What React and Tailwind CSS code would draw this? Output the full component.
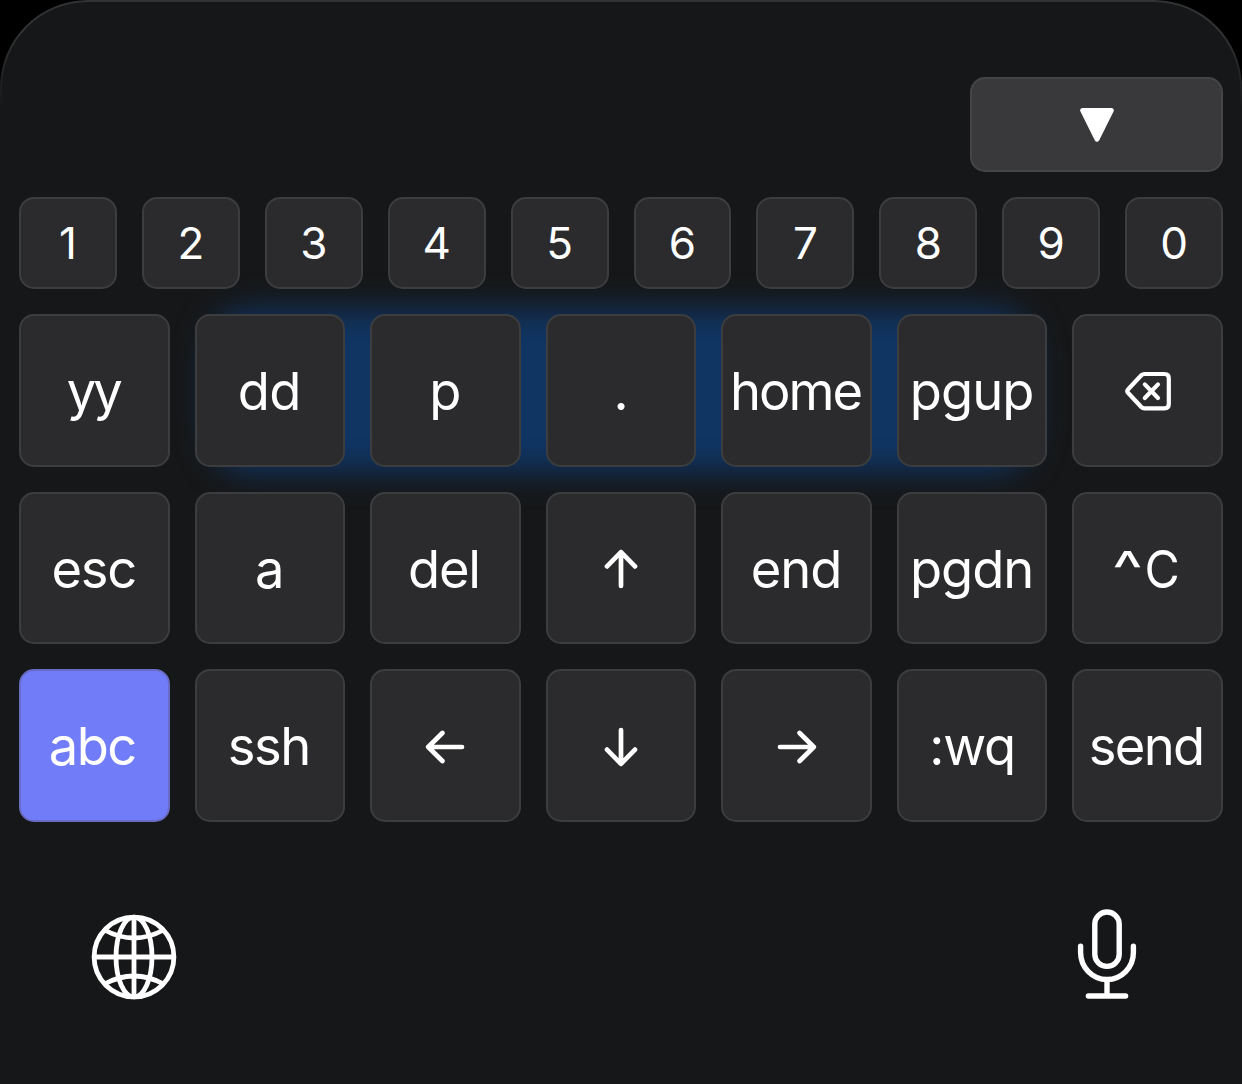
import React from "react";
import clsx from "clsx";

const digits = ["1", "2", "3", "4", "5", "6", "7", "8", "9", "0"];

function Arrow({ className }) {
  return (
    <svg
      viewBox="0 0 40 40"
      className={clsx("mt-px h-10 w-10", className)}
      fill="none"
      stroke="currentColor"
      strokeWidth="4.7"
      strokeLinecap="round"
      strokeLinejoin="round"
    >
      <path d="M20 37V3.2M6 17.4L20 3.2L34 17.4" />
    </svg>
  );
}

function Backspace() {
  return (
    <svg
      viewBox="0 0 46 40"
      className="h-10 w-[46px]"
      fill="none"
      stroke="currentColor"
      strokeWidth="4.2"
      strokeLinecap="round"
      strokeLinejoin="round"
    >
      <path d="M19.5 3H39.5Q43.8 3 43.8 7.3V33Q43.8 37.3 39.5 37.3H19.5Q17.6 37.3 16.3 36L3.2 22Q1.4 20.2 3.2 18.3L16.3 4.3Q17.6 3 19.5 3Z" />
      <path d="M19.8 13.4L33 27M33 13.4L19.8 27" />
    </svg>
  );
}

function Triangle() {
  return (
    <svg viewBox="0 0 34 34" className="h-[34px] w-[34px]">
      <path
        d="M2.7 2.5H31.3L17 31.2Z"
        fill="white"
        stroke="white"
        strokeWidth="5"
        strokeLinejoin="round"
      />
    </svg>
  );
}

function Globe() {
  return (
    <svg
      viewBox="-43 -43 86 86"
      className="h-[86px] w-[86px]"
      fill="none"
      stroke="white"
      strokeWidth="4.8"
    >
      <circle r="39.9" />
      <ellipse rx="18" ry="39.9" />
      <path d="M0 -40V40M-40 0H40" />
      <path d="M-29.5 -27Q0 -11 29.5 -27M-29.5 27Q0 11 29.5 27" />
    </svg>
  );
}

function Mic() {
  return (
    <svg
      viewBox="0 0 60 92"
      className="h-[92px] w-[60px]"
      fill="none"
      stroke="white"
      strokeWidth="5.4"
      strokeLinecap="round"
    >
      <rect x="17.8" y="4" width="24.4" height="54.4" rx="12.2" />
      <path d="M3.6 38.3V44.5A26.4 27 0 0 0 56.4 44.5V38.3" />
      <path d="M30 72V88M11.4 88H48.6" />
    </svg>
  );
}

function Key({ children, className }) {
  return (
    <button
      className={clsx(
        "flex min-w-0 items-center justify-center rounded-[15px] border-2 whitespace-nowrap text-white",
        className
      )}
    >
      {children}
    </button>
  );
}

const ctrlC = (
  <span className="flex gap-[3px] pl-px">
    <span className="inline-block scale-x-125">^</span>
    <span className="inline-block scale-x-92">C</span>
  </span>
);

const rows = [
  [
    { label: "yy", tracking: "tracking-[-3px] pr-[2px]" },
    { label: "dd", tracking: "tracking-[-0.6px] pr-px" },
    { label: "p" },
    { label: "." },
    { label: "home", tracking: "tracking-[-2px] pr-[2px]" },
    { label: "pgup", tracking: "tracking-[-1px] pr-px" },
    { label: <Backspace /> },
  ],
  [
    { label: "esc", tracking: "tracking-[-1.3px] pr-px" },
    { label: "a" },
    { label: "del", tracking: "tracking-[-1.2px] pr-[3px]" },
    { label: <Arrow /> },
    { label: "end", tracking: "tracking-[-1px] pr-px" },
    { label: "pgdn", tracking: "tracking-[-1px] pr-px" },
    { label: ctrlC },
  ],
  [
    { label: "abc", tracking: "tracking-[-1.5px] pr-[4px]", active: true },
    { label: "ssh", tracking: "tracking-[-1.5px] pr-[2px]" },
    { label: <Arrow className="-rotate-90" /> },
    { label: <Arrow className="rotate-180" /> },
    { label: <Arrow className="rotate-90" /> },
    { label: ":wq", tracking: "tracking-[-1.2px]" },
    { label: "send", tracking: "tracking-[-1.7px] pr-[3px]" },
  ],
];

function App() {
  return (
    <div className="h-[1084px] w-[1242px] overflow-hidden bg-black font-['Inter',sans-serif]">
      <div className="relative isolate flex h-full flex-col rounded-t-[88px] bg-[#161718] px-[19px] pt-[77px]">
        {/* rim light along the top edge */}
        <div className="absolute inset-x-0 top-0 h-[110px] rounded-t-[88px] border-x-2 border-t-2 border-[#323334] mask-b-from-30% mask-b-to-100%" />

        <div className="flex h-[95px] justify-end">
          <Key className="w-[253px] border-[#454547] bg-[#39393b]">
            <Triangle />
          </Key>
        </div>

        <div className="mt-[25px] grid h-[92px] grid-cols-10 gap-[25px]">
          {digits.map((d) => (
            <Key
              key={d}
              className="border-[#3c3d3f] bg-[#2b2b2d] text-[44px] leading-none"
            >
              {d}
            </Key>
          ))}
        </div>

        <div className="relative mt-[25px] flex flex-col gap-[25px]">
          {/* blue glow behind the first row */}
          <div className="absolute -top-[4px] right-[190px] left-[190px] -z-10 h-[162px] rounded-[40px] bg-[#103563] blur-[16px]" />
          {rows.map((row, i) => (
            <div key={i} className="grid h-[152.6px] grid-cols-7 gap-[25px]">
              {row.map((k, j) => (
                <Key
                  key={j}
                  className={clsx(
                    "pt-[2px] text-[52.5px] leading-none",
                    k.tracking,
                    k.active
                      ? "border-[#696cc4] bg-[#707cf8]"
                      : "border-[#3c3d3f] bg-[#2b2b2d]"
                  )}
                >
                  {k.label}
                </Key>
              ))}
            </div>
          ))}
        </div>

        <div className="mt-[86px] flex items-start justify-between pr-[86px] pl-[72px]">
          <div className="pt-[6px]">
            <Globe />
          </div>
          <Mic />
        </div>
      </div>
    </div>
  );
}

export default App;
